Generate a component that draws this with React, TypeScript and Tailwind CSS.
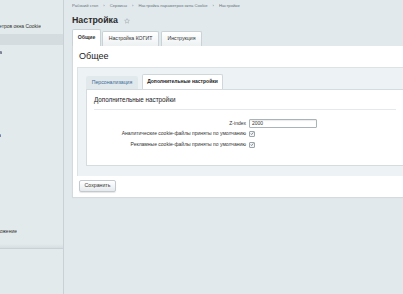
import React from 'react';

const Check = () => (
  <span className="flex h-[6px] w-[6px] items-center justify-center rounded-[1px] border border-[#9ba6ac] bg-[#f3f5f6]">
    <svg viewBox="0 0 8 8" className="h-[5px] w-[5px]">
      <path d="M1.4 4.2 L3.2 6 L6.7 1.9" fill="none" stroke="#4f5a63" strokeWidth="1.3" />
    </svg>
  </span>
);

const Star = () => (
  <svg viewBox="0 0 24 24" className="h-[6px] w-[6px]">
    <path
      d="M12 2.5l2.9 6.1 6.6.8-4.9 4.6 1.3 6.6L12 17.3l-5.9 3.3 1.3-6.6-4.9-4.6 6.6-.8z"
      fill="none"
      stroke="#9aa5ab"
      strokeWidth="2"
      strokeLinejoin="round"
    />
  </svg>
);

export default function App() {
  const crumbs = ['Рабочий стол', 'Сервисы', 'Настройка параметров окна Cookie', 'Настройки'];

  return (
    <div className="flex h-[294px] w-[403px] overflow-hidden bg-[#e2e9ec] font-['Liberation_Sans',Arial,sans-serif] text-[#222]">
      {/* left menu, cut off */}
      <div className="flex w-[64px] shrink-0 flex-col overflow-hidden border-r border-[#c8d2d6] bg-[#e3eaec] text-[5px] leading-[10px] text-[#333]">
        <div className="h-[21px]" />
        <div className="flex h-[10px] w-[41px] justify-end overflow-hidden whitespace-nowrap">
          <span>Настройка параметров окна Cookie</span>
        </div>
        <div className="h-[3px]" />
        <div className="h-[11px] bg-[#d4dcdf]" />
        <div className="h-[2px]" />
        <div className="flex h-[10px] w-[2px] justify-end overflow-hidden whitespace-nowrap">
          <span>Настройка</span>
        </div>
        <div className="h-[73px]" />
        <div className="flex h-[10px] w-[1px] justify-end overflow-hidden whitespace-nowrap">
          <span>Настройка</span>
        </div>
        <div className="h-[86px]" />
        <div className="flex h-[10px] w-[17px] justify-end overflow-hidden whitespace-nowrap">
          <span>Расположение</span>
        </div>
        <div className="h-[8px]" />
        <div className="h-[4px] bg-gradient-to-b from-transparent to-[#d6dee1]" />
        <div className="h-[1px] bg-[#c8d2d6]" />
      </div>

      {/* main */}
      <div className="flex min-w-0 flex-1 flex-col pl-[8px]">
        <div className="flex h-[12px] items-center whitespace-nowrap text-[4.2px] text-[#66757c]">
          {crumbs.map((c, i) => (
            <React.Fragment key={c}>
              {i > 0 && <span className="mx-[5px]">›</span>}
              <span>{c}</span>
            </React.Fragment>
          ))}
        </div>

        <div className="flex h-[17px] items-center gap-[6px]">
          <span className="text-[8.8px] font-bold text-[#2b2b2b]">Настройка</span>
          <Star />
        </div>

        <div className="flex h-[17px] items-end gap-[1px] text-[5.2px] font-bold text-[#333]">
          <div className="flex h-[17px] w-[29px] items-center justify-center rounded-t-[2px] border border-b-0 border-[#c9d2d6] bg-white">
            Общие
          </div>
          <div className="flex h-[15px] w-[57px] items-center justify-center rounded-t-[2px] border border-b-0 border-[#c9d2d6] bg-gradient-to-b from-white to-[#edf1f2] font-normal">
            Настройка КОГИТ
          </div>
          <div className="ml-[1px] flex h-[15px] w-[41px] items-center justify-center rounded-t-[2px] border border-b-0 border-[#c9d2d6] bg-gradient-to-b from-white to-[#edf1f2] font-normal">
            Инструкция
          </div>
        </div>

        <div className="flex flex-col border-l border-[#d3dadd] bg-white shadow-[0_1px_1px_rgba(0,0,0,0.06)]">
          <div className="flex h-[21px] items-center pl-[6px] text-[9px] text-[#222]">Общее</div>

          <div className="ml-[4px] flex flex-col border-l border-t border-[#dbe3e6] bg-[#edf2f4] pb-[10px] pl-[8px] pt-[6px]">
            <div className="flex h-[15px] items-end gap-[4px] whitespace-nowrap">
              <div className="flex h-[13px] w-[52px] items-center justify-center rounded-t-[2px] bg-[#e2e9ec] text-[5.2px] text-[#3a6a98]">
                Персонализация
              </div>
              <div className="flex h-[15px] w-[81px] items-center justify-center rounded-t-[2px] border border-b-0 border-[#cfd7db] bg-white text-[5px] font-bold text-[#222]">
                Дополнительные настройки
              </div>
            </div>

            <div className="flex flex-col border border-r-0 border-[#d4dce0] bg-white px-[7px] pb-[15px]">
              <div className="flex h-[20px] items-center border-b border-[#e4eaec] text-[6.3px] text-[#222]">
                Дополнительные настройки
              </div>
              <div className="grid grid-cols-[152px_1fr] items-center gap-x-[3px] pt-[9px] text-[5px] text-[#333]">
                <div className="flex h-[9px] items-center justify-end">Z-index</div>
                <div className="flex h-[9px] items-center">
                  <div className="flex h-[9px] w-[68px] items-center rounded-[1px] border border-[#a9b3b8] bg-white pl-[2px] text-[5px] shadow-[inset_0_1px_1px_rgba(0,0,0,0.08)]">
                    2000
                  </div>
                </div>
                <div className="flex h-[11px] items-center justify-end whitespace-nowrap">
                  Аналитические cookie-файлы приняты по умолчанию
                </div>
                <div className="flex h-[11px] items-center">
                  <Check />
                </div>
                <div className="flex h-[11px] items-center justify-end whitespace-nowrap">
                  Рекламные cookie-файлы приняты по умолчанию
                </div>
                <div className="flex h-[11px] items-center">
                  <Check />
                </div>
              </div>
            </div>
          </div>

          <div className="flex pb-[5px] pl-[6px] pt-[4px]">
            <button className="flex h-[12px] w-[37px] items-center justify-center rounded-[2px] border border-[#c2cacf] bg-gradient-to-b from-white to-[#e6eaec] text-[5.2px] text-[#333] shadow-[0_1px_1px_rgba(0,0,0,0.1)]">
              Сохранить
            </button>
          </div>
        </div>
      </div>
    </div>
  );
}
